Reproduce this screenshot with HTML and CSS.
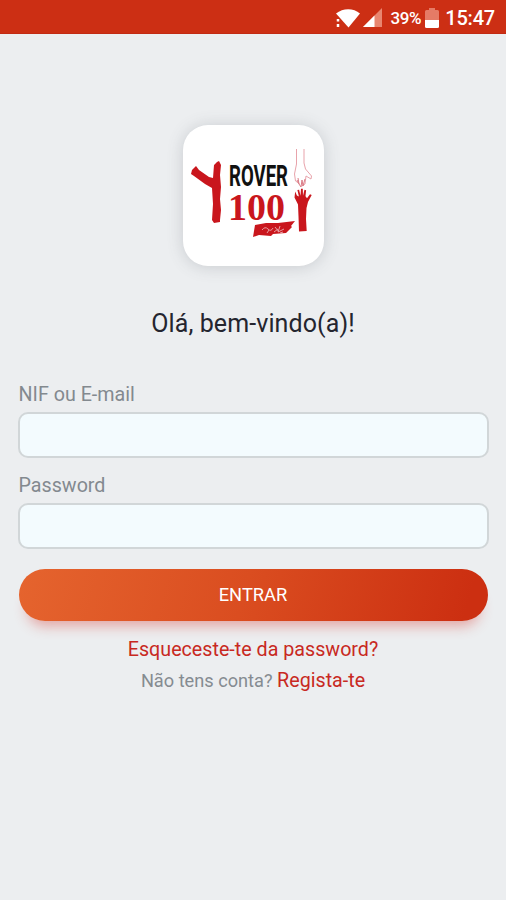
FILE: index.html
```
<!DOCTYPE html>
<html lang="pt">
<head>
<meta charset="utf-8">
<title>Rover 100</title>
<link rel="stylesheet" href="styles.css">
</head>
<body>
<header class="status">
  <svg class="wifi" width="26" height="22" viewBox="0 0 26 22"><path d="M1 6.500C8 .8 18.500 .8 25 6.500L13.500 20.500Z" fill="#fff"/><path d="M3 12v2.500M3 17v3" stroke="#fff" stroke-width="2.500"/></svg>
  <svg class="signal" width="21" height="20" viewBox="0 0 21 20"><path d="M20 0V19H1Z" fill="#e88670"/><path d="M12.500 7.500V19H1Z" fill="#fff"/></svg>
  <span class="percent">39%</span>
  <svg class="battery" width="14" height="20" viewBox="0 0 14 20"><path d="M4 0h6v2h2.500q1.500 0 1.500 1.500V12H0V3.500Q0 2 1.500 2H4Z" fill="#e57b66"/><path d="M0 12h14v6.500q0 1.500-1.500 1.500h-11Q0 20 0 18.500Z" fill="#fff"/></svg>
  <span class="clock">15:47</span>
</header>
<main class="login">
  <div class="logo">
    <svg width="141" height="141" viewBox="0 0 141 141">
      <g fill="#c9161d">
        <path d="M9 45l4-4 3 4 10 7 4 1 1-13 3-3 2-1 2 4-1 10 1 12-1 12 1 11-1 10 0 2-6 1-2-3 1-16-1-16-7-4-11-8-3-2Z"/>
        <path d="M72 100l11-2 12 0 17-2-4 5 1 1-6 6-13 1-2 2-12-1-6 2 1-6Z"/>
        <path d="M116 106.500l-.5-15-.5-12-3.500-7 .7-6 1.700 4 2 1-1.500-6.500 1.700-.2 1.400 6 .5-7 1.800 0 .2 7 1.500-6 1.600.5-.6 6 1.500 2 3-4 1.700.8-3.700 7-1.500 6-.5 11 .7 12Z"/>
      </g>
      <g fill="none" stroke="#e8a3ab" stroke-width="1">
        <path d="M113.500 24v15l-2 10 1 7 3 2M121 24v14l1.500 6 6 7-.5 3-5-3-1 8-3 2"/>
        <path d="M115 53l1 6 2 3 1-7 1 6 2-7M114 55l2 4" stroke="#db7b86"/>
      </g>
      <path d="M79 105q3-4 6-1t5-1M84 108l2-3M92 102l4 5M97 101l-2 6 6-3M91 107l4-3M97 108l3-1" fill="none" stroke="#e99da1" stroke-width="1"/>
      <text class="rover" x="46" y="60.500" textLength="59" lengthAdjust="spacingAndGlyphs">ROVER</text>
      <text class="hundred" x="45" y="94.500" textLength="57" lengthAdjust="spacingAndGlyphs">100</text>
    </svg>
  </div>
  <h1 class="welcome">Olá, bem-vindo(a)!</h1>
  <form class="form">
    <label class="label" for="user">NIF ou E-mail</label>
    <input class="field" id="user" type="text">
    <label class="label" for="pass">Password</label>
    <input class="field" id="pass" type="password">
    <button class="submit" type="button">ENTRAR</button>
  </form>
  <a class="forgot">Esqueceste-te da password?</a>
  <p class="register">Não tens conta? <a class="link">Regista-te</a></p>
</main>
</body>
</html>
```
FILE: styles.css
```
* { box-sizing: border-box; }
body {
  margin: 0;
  min-height: 900px;
  background: #eceef0;
  font-family: Roboto, "Liberation Sans", sans-serif;
}
.status {
  display: flex;
  justify-content: flex-end;
  align-items: center;
  height: 34px;
  padding: 2px 11px 0 0;
  background: #cc2f14;
  border-bottom: 1px solid #c12a13;
  color: #fff;
}
.wifi { margin-right: 1px; }
.signal { margin-right: 8px; }
.percent { font-size: 17px; font-weight: 500; letter-spacing: -.4px; margin-right: 4px; }
.battery { margin-right: 6px; }
.clock { font-size: 20px; font-weight: 500; letter-spacing: -.2px; }
.login {
  display: flex;
  flex-direction: column;
  align-items: center;
  padding: 91px 18px 0;
}
.logo {
  width: 141px;
  height: 141px;
  border-radius: 25px;
  background: #fff;
  box-shadow: 0 1px 16px rgba(80, 90, 100, .23);
}
.logo svg { display: block; overflow: visible; }
.rover { font: 700 30px Roboto, sans-serif; fill: #111; }
.hundred { font: 700 38px "Liberation Serif", serif; fill: #c9161d; }
.welcome {
  margin: 41px 0 0;
  font-size: 25px;
  line-height: 33px;
  font-weight: 400;
  letter-spacing: .1px;
  color: #24252f;
}
.form {
  display: flex;
  flex-direction: column;
  width: 471px;
}
.label {
  margin-top: 42px;
  padding-left: 1px;
  font-size: 19.7px;
  line-height: 26px;
  color: #83898f;
}
.field {
  height: 46px;
  margin: 4px 0 0;
  border: 2px solid #d1d6d8;
  border-radius: 10px;
  background: #f3fbfe;
}
.field + .label { margin-top: 15px; }
.submit {
  height: 52px;
  margin: 20px 1px 0;
  padding: 0 6px 2px;
  border: 0;
  border-radius: 26px;
  background: linear-gradient(105deg, #e5642e 0%, #da4d20 48%, #cc2f11 95%);
  box-shadow: 0 13px 13px -8px rgba(218, 65, 55, .42);
  color: #fff;
  font-family: inherit;
  font-size: 18.3px;
}
.forgot {
  margin-top: 16px;
  font-size: 19.7px;
  line-height: 26px;
  color: #c82922;
}
.register {
  margin: 4px 0 0;
  font-size: 18.2px;
  line-height: 28px;
  color: #858b91;
}
.link { font-size: 19.7px; color: #c82922; }
```
